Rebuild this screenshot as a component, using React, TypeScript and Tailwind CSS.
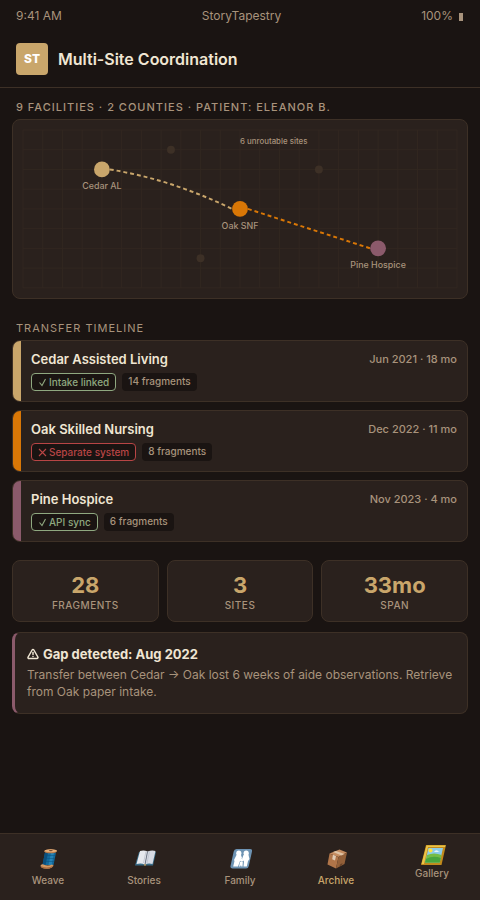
import { clsx } from 'clsx';
import { TriangleAlert } from 'lucide-react';
import type { ReactNode } from 'react';

const sites = [
  {
    name: 'Cedar Assisted Living',
    meta: 'Jun 2021 · 18 mo',
    bar: 'bg-[#c9a66b]',
    status: 'Intake linked',
    linked: true,
    fragments: '14 fragments',
  },
  {
    name: 'Oak Skilled Nursing',
    meta: 'Dec 2022 · 11 mo',
    bar: 'bg-[#d97706]',
    status: 'Separate system',
    linked: false,
    fragments: '8 fragments',
  },
  {
    name: 'Pine Hospice',
    meta: 'Nov 2023 · 4 mo',
    bar: 'bg-[#8b5a6b]',
    status: 'API sync',
    linked: true,
    fragments: '6 fragments',
  },
];

const stats = [
  { value: '28', label: 'FRAGMENTS' },
  { value: '3', label: 'SITES' },
  { value: '33mo', label: 'SPAN' },
];

const columns = Array.from({ length: 23 }, (_, i) => i * 20);
const rows = Array.from({ length: 9 }, (_, i) => i * 20);

function StatusMark({ linked }: { linked: boolean }) {
  return (
    <svg viewBox="0 0 10 10" className="h-2.5 w-2.5" fill="none" stroke="currentColor" aria-hidden="true">
      <path d={linked ? 'M1.500 5.500 4 8.500 7.500 2' : 'M1 2 8 9M8 2 1 9'} strokeWidth="1.100" />
    </svg>
  );
}

function SpoolIcon() {
  return (
    <svg viewBox="-2 1 24 24" className="h-6 w-6" aria-hidden="true">
      <path d="M7 5.500 18 5.500 15.500 18 4.500 18Z" fill="#12699b" />
      <path d="M7 5.500 10 6 7.500 18 4.500 18Z" fill="#0b4f7c" />
      <path d="M13 6 16 6 13.500 18 10.500 18Z" fill="#2382b5" />
      <path d="M6.500 8.500H17M6 11.500H16.500M5.500 14.500H16" stroke="#0a507d" strokeWidth=".5" />
      <ellipse cx="12.500" cy="4.300" rx="6.500" ry="2" fill="#b77b4b" />
      <ellipse cx="12.800" cy="3.700" rx="6.200" ry="1.500" fill="#e5ae78" />
      <ellipse cx="12.800" cy="3.600" rx="2" ry=".6" fill="#6f462b" />
      <path d="M2.500 18.500Q4 16.800 5.500 17.500Q10 19.500 14 17.500L15.500 18.500Q14.500 21.500 9 21.700Q3 21.700 2.500 18.500Z" fill="#d39a64" />
      <path d="M2.500 19Q9 22 15.500 18.500Q14.500 21.500 9 21.700Q3 21.700 2.500 19Z" fill="#a86c40" />
    </svg>
  );
}

function BookIcon() {
  return (
    <svg viewBox="-2 2 24 24" className="h-6 w-6" aria-hidden="true">
      <path d="M5 6 22 6 19 19.500 1 19.500Z" fill="#376b87" />
      <path d="M6 5Q10 3.800 13.500 5.500L11 18.500Q7 16.800 2.500 18Z" fill="#e7e9ee" />
      <path d="M13.500 5.500Q18 3.800 21.500 5L18.500 18Q14.500 16.800 11 18.500Z" fill="#d7dbe4" />
      <path d="M13.500 5.500 11 18.500" stroke="#737987" strokeWidth="1" />
      <path d="M12 5.500 9.500 17M15.500 5.500 13 17" stroke="#bcc1cd" strokeWidth=".8" />
      <path d="M9.500 18.500 12.500 18.500 11 20Z" fill="#dba44a" />
    </svg>
  );
}

function FamilyIcon() {
  return (
    <svg viewBox="-1 2 24 24" className="h-6 w-6" aria-hidden="true">
      <path d="M7.500 3H21Q23.500 3 23 5.500L19.800 20Q19.300 22.500 17 22.500H3.500Q1 22.500 1.500 20L4.700 5.500Q5.200 3 7.500 3Z" fill="#6d93b3" />
      <g fill="#fff">
        <circle cx="9.800" cy="7.200" r="2.600" />
        <path d="M7.500 9H12L13 12 11 15 9 20.500H4.200L5.500 15 5 14Z" />
        <circle cx="17.200" cy="7.200" r="2.600" />
        <path d="M14.500 9H19.500L20.500 13 19 15 17.800 20.500H14.500L15 15.500 13 13Z" />
        <circle cx="12.600" cy="14.200" r="1.500" />
        <path d="M11 16H13.800L13.500 20.500H12.300L12 19 11.200 20.500H10Z" />
      </g>
    </svg>
  );
}

function BoxIcon() {
  return (
    <svg viewBox="-1 1 24 24" className="h-6 w-6" aria-hidden="true">
      <path d="M4.500 6.500 14.500 2.500 22 5.500 13.500 10Z" fill="#c58c60" />
      <path d="M4.500 6.500 13.500 10 11 21.500 2.500 17.500Z" fill="#b07549" />
      <path d="M13.500 10 22 5.500 19.500 17 11 21.500Z" fill="#936039" />
      <path d="M8 5 11 3.900 19.500 7 16.500 8.500Z" fill="#dfc3a5" />
      <path d="M8 7.800 11 9 10 13.500 7.200 12.200Z" fill="#e2cbb3" />
      <path d="M15 17.500 17.500 16 17 18 14.500 19.500Z" fill="#69442a" />
    </svg>
  );
}

function PictureIcon() {
  return (
    <svg viewBox="-2 0 28 24" className="h-6 w-7" aria-hidden="true">
      <path d="M6 2H26L21.500 22H1Z" fill="#c18a1c" />
      <path d="M6.500 2.500H25.500L25 4H8L4 21H1.500Z" fill="#ebc548" />
      <path d="M8.500 5H23L19.700 19.500H5Z" fill="#8ccde9" />
      <path d="M7 12Q14 9 21.500 12L19.700 19.500H5Z" fill="#75bd45" />
      <path d="M6 16Q13 12 20.800 15L19.700 19.500H5Z" fill="#48a63d" />
      <circle cx="10.500" cy="7.500" r="2" fill="#ffe33d" />
      <path d="M14 9Q16 6 18.500 8.500L20 9Z" fill="#e6f5f7" />
    </svg>
  );
}

const tabs: { label: string; icon: ReactNode; active?: boolean; raised?: boolean }[] = [
  { label: 'Weave', icon: <SpoolIcon /> },
  { label: 'Stories', icon: <BookIcon /> },
  { label: 'Family', icon: <FamilyIcon /> },
  { label: 'Archive', icon: <BoxIcon />, active: true },
  { label: 'Gallery', icon: <PictureIcon />, raised: true },
];

function RouteMap() {
  return (
    <svg viewBox="0 0 440 160" className="block w-full overflow-visible" role="img" aria-label="Transfer route map">
      <g stroke="#3d3026" strokeWidth="1" opacity=".4">
        {columns.map((x) => (
          <line key={x} x1={x} y1="0" x2={x} y2="160" />
        ))}
        {rows.map((y) => (
          <line key={y} x1="0" y1={y} x2="440" y2={y} />
        ))}
      </g>
      <path d="M88 40Q150 50 212 80" fill="none" stroke="#c9a66b" strokeWidth="2" strokeDasharray="4 3" />
      <path d="M228 80L352 120" fill="none" stroke="#d97706" strokeWidth="2" strokeDasharray="4 3" />
      <circle cx="80" cy="40" r="8" fill="#c9a66b" />
      <circle cx="220" cy="80" r="8" fill="#d97706" />
      <circle cx="360" cy="120" r="8" fill="#8b5a6b" />
      <g fill="#3d3026">
        <circle cx="150" cy="20" r="4" />
        <circle cx="300" cy="40" r="4" />
        <circle cx="180" cy="130" r="4" />
      </g>
      <g fill="#a8937c" fontSize="9" fontWeight="500" textAnchor="middle">
        <text x="80" y="60">Cedar AL</text>
        <text x="220" y="100">Oak SNF</text>
        <text x="360" y="140">Pine Hospice</text>
      </g>
      <text x="220" y="14" fill="#a8937c" fontSize="8" fontWeight="500">6 unroutable sites</text>
    </svg>
  );
}

export default function App() {
  return (
    <div className="flex min-h-screen flex-col bg-[#1a1412] font-['Inter','Noto_Sans',sans-serif] text-[#f0e6d3]">
      <div className="flex h-8 items-center justify-between px-4 text-xs text-[#a8937c]">
        <span>9:41 AM</span>
        <span>StoryTapestry</span>
        <span className="flex items-center gap-1.5">
          100%
          <span className="mt-0.5 mr-px h-2 w-1 bg-[#a8937c]" />
        </span>
      </div>

      <header className="flex items-center gap-2.5 border-b border-[#3d3026] px-4 pt-[11px] pb-3">
        <div className="flex h-8 w-8 items-center justify-center rounded bg-[#c9a66b] text-xs font-extrabold text-white">ST</div>
        <h1 className="text-base font-semibold">Multi-Site Coordination</h1>
      </header>

      <main className="flex-1 px-3 pt-[11px]">
        <h2 className="px-1 pb-1 text-[11px] leading-4 font-medium tracking-[1px] text-[#a8937c]">
          9 FACILITIES · 2 COUNTIES · PATIENT: ELEANOR B.
        </h2>
        <div className="rounded-lg border border-[#3d3026] bg-[#2a211d] p-2.5">
          <RouteMap />
        </div>

        <h2 className="px-1 pt-[21px] pb-1 text-[11px] leading-4 tracking-[1px] text-[#a8937c]">TRANSFER TIMELINE</h2>
        <div className="flex flex-col gap-2">
          {sites.map((site) => (
            <article key={site.name} className="flex overflow-hidden rounded-lg border border-[#3d3026] bg-[#2a211d]">
              <div className={clsx('w-2 shrink-0', site.bar)} />
              <div className="flex-1 p-2.5">
                <div className="flex items-center justify-between">
                  <h3 className="text-[13px] leading-4 font-semibold">{site.name}</h3>
                  <span className="text-[11px] leading-4 font-medium text-[#a8937c]">{site.meta}</span>
                </div>
                <div className="mt-1.5 flex gap-1.5 text-[10px] leading-3 font-medium">
                  <span
                    className={clsx(
                      'flex items-center gap-px rounded border bg-[#1a1412] px-1.5 py-0.5',
                      site.linked ? 'border-[#8fa880] text-[#8fa880]' : 'border-[#b84545] text-[#b84545]',
                    )}
                  >
                    <StatusMark linked={site.linked} />
                    {site.status}
                  </span>
                  <span className="rounded bg-[#1a1412] px-1.5 py-0.5 text-[#a8937c]">{site.fragments}</span>
                </div>
              </div>
            </article>
          ))}
        </div>

        <div className="mt-[18px] grid grid-cols-3 gap-2">
          {stats.map((stat) => (
            <div key={stat.label} className="rounded-lg border border-[#3d3026] bg-[#2a211d] py-2.5 text-center">
              <div className="text-[22px] leading-7 font-bold text-[#c9a66b]">{stat.value}</div>
              <div className="text-[10px] leading-3 font-medium tracking-wider text-[#a8937c]">{stat.label}</div>
            </div>
          ))}
        </div>

        <section className="mt-2.5 rounded-lg border border-l-[3px] border-[#3d3026] border-l-[#8b5a6b] bg-[#2a211d] px-3 py-[13px]">
          <h3 className="flex items-center gap-1 text-[13px] leading-4 font-bold">
            <TriangleAlert className="h-3 w-3" strokeWidth={3} aria-hidden="true" />
            Gap detected: Aug 2022
          </h3>
          <p className="mt-1 text-xs leading-[17px] text-[#a8937c]">
            Transfer between Cedar → Oak lost 6 weeks of aide observations. Retrieve from Oak paper intake.
          </p>
        </section>
      </main>

      <nav className="grid h-[67px] grid-cols-5 border-t border-[#3d3026] bg-[#2a211d]">
        {tabs.map((tab) => (
          <button
            key={tab.label}
            className={clsx(
              'flex flex-col items-center text-[10px] font-medium',
              tab.raised ? 'pt-[9px] leading-3' : 'pt-3.5 leading-4',
              tab.active ? 'text-[#c9a66b]' : 'text-[#a8937c]',
            )}
          >
            {tab.icon}
            {tab.label}
          </button>
        ))}
      </nav>
    </div>
  );
}
